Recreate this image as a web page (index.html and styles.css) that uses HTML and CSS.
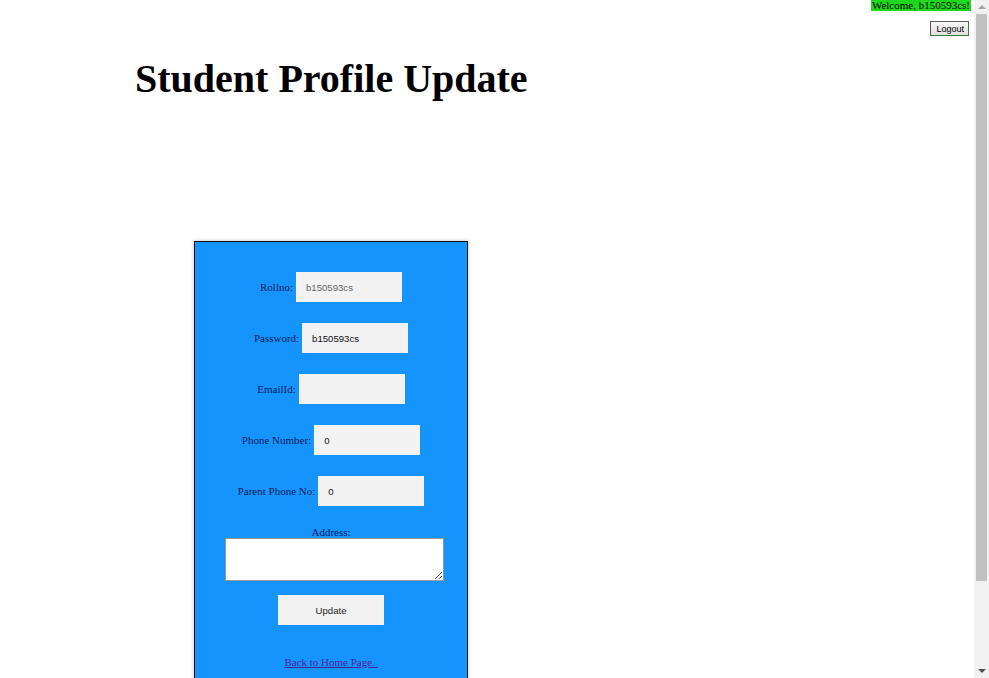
FILE: index.html
```html
<!DOCTYPE html>
<html>
<head>
<meta charset="utf-8">
<title>Student Profile Update</title>
<link rel="stylesheet" href="styles.css">
</head>
<body>
<div class="page">
  <div class="topbar">
    <span class="welcome">Welcome, b150593cs!</span>
    <button class="logout">Logout</button>
  </div>
  <h1 class="title">Student Profile Update</h1>
  <form class="card">
    <div class="row"><label>Rollno:</label> <input class="field ro" type="text" value="b150593cs" readonly></div>
    <div class="row"><label>Password:</label> <input class="field" type="text" value="b150593cs"></div>
    <div class="row"><label>EmailId:</label> <input class="field" type="text" value=""></div>
    <div class="row"><label>Phone Number:</label> <input class="field" type="text" value="0"></div>
    <div class="row"><label>Parent Phone No:</label> <input class="field" type="text" value="0"></div>
    <div class="addr">
      <label>Address:</label>
      <textarea class="area"></textarea>
    </div>
    <div class="btnrow"><button type="button" class="update">Update</button></div>
    <div class="back"><a href="#">Back to Home Page.&nbsp;</a></div>
  </form>
</div>
<div class="scrollbar" aria-hidden="true">
  <span class="arrow up"></span>
  <span class="thumb"></span>
  <span class="arrow down"></span>
</div>
</body>
</html>
```
FILE: styles.css
```css
html, body {
  margin: 0;
  padding: 0;
  background: #ffffff;
}
body {
  font-family: "Liberation Serif", "Times New Roman", serif;
  color: #000;
}
.page {
  padding-right: 15px;
  padding-bottom: 14px;
}
.topbar {
  display: flex;
  flex-direction: column;
  align-items: flex-end;
  padding-right: 4px;
}
.welcome {
  background: #1ed81e;
  font-size: 11px;
  line-height: 11px;
  height: 11px;
  color: #000;
  padding: 0 1px;
  margin-right: -1px;
}
.logout {
  margin-top: 10px;
  margin-right: 1px;
  font-family: "Liberation Sans", Arial, sans-serif;
  font-size: 9px;
  height: 15px;
  padding: 0 4px 0 5px;
  background: linear-gradient(#f6f6f6, #e0e0e0);
  border: 1px solid #5a5a5a;
  border-right-color: #3a7a3a;
  border-bottom-color: #3a7a3a;
  border-radius: 0;
  color: #000;
}
.title {
  font-size: 40px;
  font-weight: bold;
  margin: 20px 0 0 135px;
  line-height: 46px;
}
.card {
  width: 272px;
  margin: 139px 0 0 194px;
  background: #1694fe;
  border: 1px solid #111;
  box-shadow: 0 0 4px rgba(0,0,0,0.25);
  padding: 30px 0 80px;
  display: flex;
  flex-direction: column;
  align-items: stretch;
}
.row {
  height: 30px;
  margin-bottom: 21px;
  display: flex;
  justify-content: center;
  align-items: center;
  gap: 3px;
}
.row label, .addr label {
  font-size: 11px;
  color: #0c1c5a;
}
.field {
  width: 106px;
  height: 30px;
  box-sizing: border-box;
  border: none;
  background: #f2f2f2;
  padding: 0 10px;
  font-family: "Liberation Sans", Arial, sans-serif;
  font-size: 9.6px;
  color: #111;
  outline: none;
}
.field.ro {
  color: #666;
}
.addr {
  display: flex;
  flex-direction: column;
  align-items: center;
  margin-top: -1px;
}
.addr label {
  line-height: 12px;
}
.area {
  width: 219px;
  height: 43px;
  box-sizing: border-box;
  border: 1px solid #999;
  background: #fff;
  margin: 0 0 0 7px;
  resize: both;
}
.btnrow {
  display: flex;
  justify-content: center;
  margin-top: 14px;
}
.update {
  width: 106px;
  height: 30px;
  border: none;
  background: #f2f2f2;
  font-family: "Liberation Sans", Arial, sans-serif;
  font-size: 9.6px;
  color: #222;
}
.back {
  text-align: center;
  margin-top: 31px;
  font-size: 11px;
}
.back a {
  color: #4b1f9a;
}
.scrollbar {
  position: fixed;
  top: 0;
  right: 0;
  width: 15px;
  height: 100vh;
  background: #f1f1f1;
  display: flex;
  flex-direction: column;
  align-items: center;
}
.arrow {
  width: 0;
  height: 0;
  border-left: 4px solid transparent;
  border-right: 4px solid transparent;
}
.arrow.up {
  margin-top: 5px;
  border-bottom: 4px solid #a3a3a3;
}
.arrow.down {
  margin-top: auto;
  margin-bottom: 5px;
  border-top: 4px solid #505050;
}
.thumb {
  width: 11px;
  height: 567px;
  margin-top: 5px;
  background: #c1c1c1;
}
```
